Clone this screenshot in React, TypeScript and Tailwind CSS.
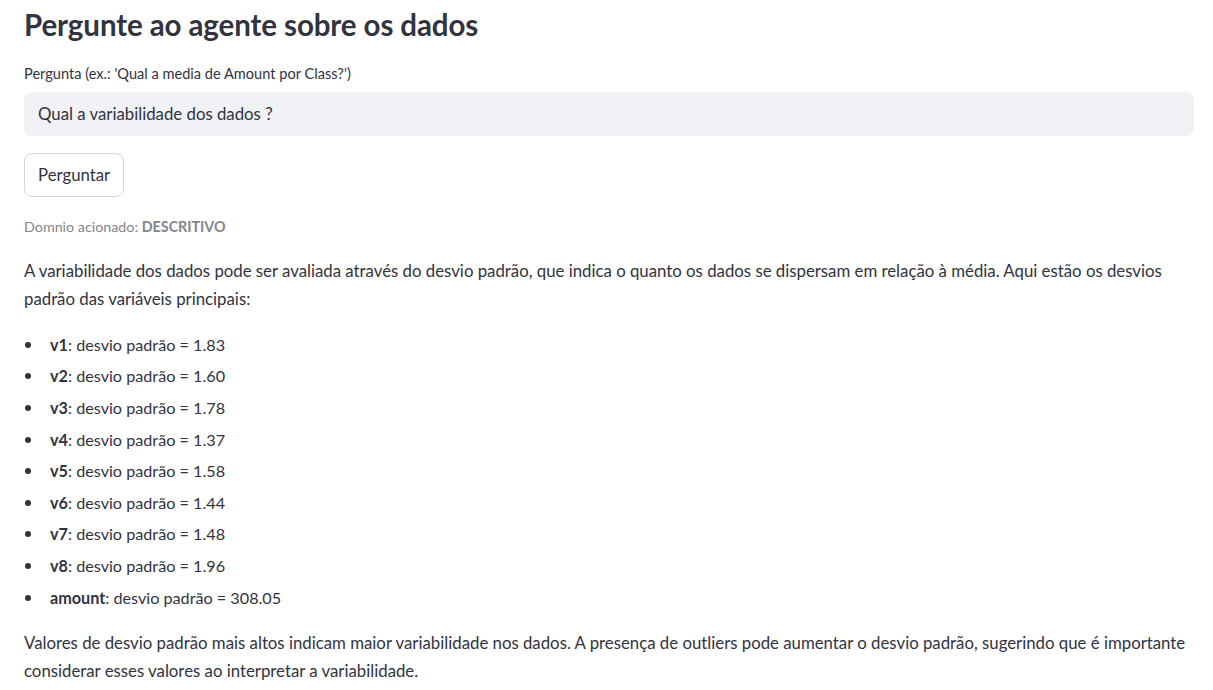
const stats = [
  { name: "v1", value: "1.83" },
  { name: "v2", value: "1.60" },
  { name: "v3", value: "1.78" },
  { name: "v4", value: "1.37" },
  { name: "v5", value: "1.58" },
  { name: "v6", value: "1.44" },
  { name: "v7", value: "1.48" },
  { name: "v8", value: "1.96" },
  { name: "amount", value: "308.05" },
];

export default function App() {
  return (
    <main className="min-h-screen bg-white pl-6 pr-[19px] font-['Lato',_'Noto_Sans',_sans-serif] text-[#31333f]">
      <h1 className="h-[50px] text-[29.5px] font-bold leading-[50px] tracking-[-0.1px]">
        Pergunte ao agente sobre os dados
      </h1>

      <label className="mt-[14px] block text-[14.6px] leading-[20px]">
        Pergunta (ex.: 'Qual a media de Amount por Class?')
      </label>
      <div className="mt-2 flex h-[44px] items-center rounded-lg bg-[#f0f2f6] px-[14px] text-[16.8px]">
        Qual a variabilidade dos dados ?
      </div>

      <button className="mt-[17px] flex h-[44px] items-center rounded-lg border border-[#d6d6d9] bg-white px-[13px] text-[16.8px]">
        Perguntar
      </button>

      <p className="mt-5 text-[14.3px] leading-[20px] text-[#83858c]">
        Domnio acionado: <span className="font-bold">DESCRITIVO</span>
      </p>

      <div className="text-[16.8px] leading-[28px]">
        <p className="mt-5">
          A variabilidade dos dados pode ser avaliada através do desvio padrão, que indica o quanto os dados se
          dispersam em relação à média. Aqui estão os desvios padrão das variáveis principais:
        </p>

        <ul className="mt-4">
          {stats.map((s) => (
            <li key={s.name} className="flex items-center py-[1.8px] text-[16.2px]">
              <span className="ml-[1px] mr-[19px] h-[6px] w-[6px] rounded-full bg-[#31333f]" />
              <span>
                <strong className="font-bold">{s.name}</strong>: desvio padrão = {s.value}
              </span>
            </li>
          ))}
        </ul>

        <p className="mt-4">
          Valores de desvio padrão mais altos indicam maior variabilidade nos dados. A presença de outliers pode
          aumentar o desvio padrão, sugerindo que é importante considerar esses valores ao interpretar a variabilidade.
        </p>
      </div>
    </main>
  );
}
